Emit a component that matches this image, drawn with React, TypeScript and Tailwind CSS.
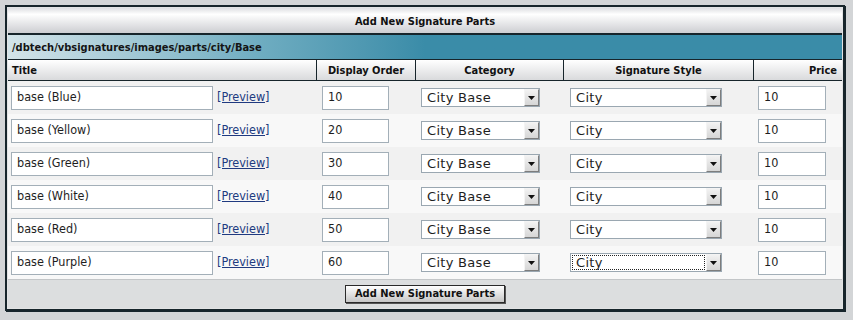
import React from 'react';

const ROWS = [
  { title: 'base (Blue)', order: '10' },
  { title: 'base (Yellow)', order: '20' },
  { title: 'base (Green)', order: '30' },
  { title: 'base (White)', order: '40' },
  { title: 'base (Red)', order: '50' },
  { title: 'base (Purple)', order: '60' },
];

const GRID = 'grid grid-cols-[309px_99px_148px_190px_88px]';

const TextBox = ({ value, width }: { value: string; width: string }) => (
  <div
    className={`flex h-[24px] items-center border border-[#a3afb8] bg-white px-[5px] text-[12.5px] text-[#1e1e1e] ${width}`}
  >
    {value}
  </div>
);

const SelectBox = ({ value, width, focused }: { value: string; width: string; focused?: boolean }) => (
  <div className={`flex h-[19px] items-center border border-[#9aa7b1] bg-white ${width}`}>
    <div className="flex h-full flex-1 items-center p-px">
      <div
        className={`flex h-full w-full items-center pl-[3px] font-['DejaVu_Sans',sans-serif] text-[13px] tracking-[0.3px] text-[#1e1e1e] ${
          focused ? 'border border-dotted border-[#222]' : 'border border-transparent'
        }`}
      >
        {value}
      </div>
    </div>
    <div className="flex h-[17px] w-[15px] items-center justify-center border border-t-[#f4f4f4] border-l-[#f4f4f4] border-r-[#7d7d7d] border-b-[#7d7d7d] bg-gradient-to-b from-[#f2f2f2] to-[#d6d6d6]">
      <svg width="7" height="4" viewBox="0 0 7 4">
        <path d="M0 0 L7 0 L3.5 4 Z" fill="#111" />
      </svg>
    </div>
  </div>
);

export default function App() {
  return (
    <div className="min-h-screen bg-[#d3d5d7] pt-[5px] pl-[5px] font-['DejaVu_Sans_Condensed','DejaVu_Sans',Verdana,sans-serif] text-[#111]">
      <div className="w-[840px] border-2 border-[#17252b] bg-[#e2e3e4] p-px shadow-[1px_1px_0_#17252b]">
        {/* Title bar */}
        <div className="flex h-[27px] items-center justify-center border-b-2 border-[#17252b] bg-gradient-to-b from-[#dedfe2] via-white via-25% to-[#cdced2] pt-[3px] text-[11px] font-bold">
          Add New Signature Parts
        </div>

        {/* Path bar */}
        <div className="flex h-[25px] items-center border-b border-[#17252b] bg-gradient-to-r from-[#d3e4e9] via-[#6fadc1] via-30% to-[#3a8ca8] to-50% pt-[2px] pl-[4px] text-[11px] font-bold text-[#141414]">
          /dbtech/vbsignatures/images/parts/city/Base
        </div>

        {/* Column headers */}
        <div className={`${GRID} h-[21px] border-b border-[#17252b] bg-gradient-to-b from-white to-[#d9dadc] text-[11px] font-bold`}>
          <div className="flex items-center border-r border-[#17252b] pt-[2px] pl-[4px]">Title</div>
          <div className="flex items-center justify-center border-r border-[#17252b] pt-[2px]">Display Order</div>
          <div className="flex items-center justify-center border-r border-[#17252b] pt-[2px]">Category</div>
          <div className="flex items-center justify-center border-r border-[#17252b] pt-[2px]">Signature Style</div>
          <div className="flex items-center justify-end pt-[2px] pr-[5px]">Price</div>
        </div>

        {/* Data rows */}
        {ROWS.map((row, i) => (
          <div
            key={row.title}
            className={`${GRID} h-[33px] ${i % 2 === 0 ? 'bg-[#f1f1f1]' : 'bg-[#f8f8f8]'}`}
          >
            <div className="flex items-center gap-[4px] pl-[3px]">
              <TextBox value={row.title} width="w-[202px]" />
              <a href="#" className="text-[12.5px] text-[#203a80] underline">
                [Preview]
              </a>
            </div>
            <div className="flex items-center pl-[5px]">
              <TextBox value={row.order} width="w-[67px]" />
            </div>
            <div className="flex items-center pl-[5px]">
              <SelectBox value="City Base" width="w-[119px]" />
            </div>
            <div className="flex items-center pl-[6px]">
              <SelectBox value="City" width="w-[152px]" focused={i === ROWS.length - 1} />
            </div>
            <div className="flex items-center pl-[4px]">
              <TextBox value="10" width="w-[68px]" />
            </div>
          </div>
        ))}

        {/* Footer */}
        <div className="flex h-[29px] items-center justify-center border-t border-[#c3c6c8] bg-[#dcdedf]">
          <button className="h-[18px] border border-[#2a2a2a] bg-gradient-to-b from-white to-[#c6c6c6] px-[9px] text-[11px] font-bold text-[#111] shadow-[1px_1px_0_#555]">
            Add New Signature Parts
          </button>
        </div>
      </div>
    </div>
  );
}
